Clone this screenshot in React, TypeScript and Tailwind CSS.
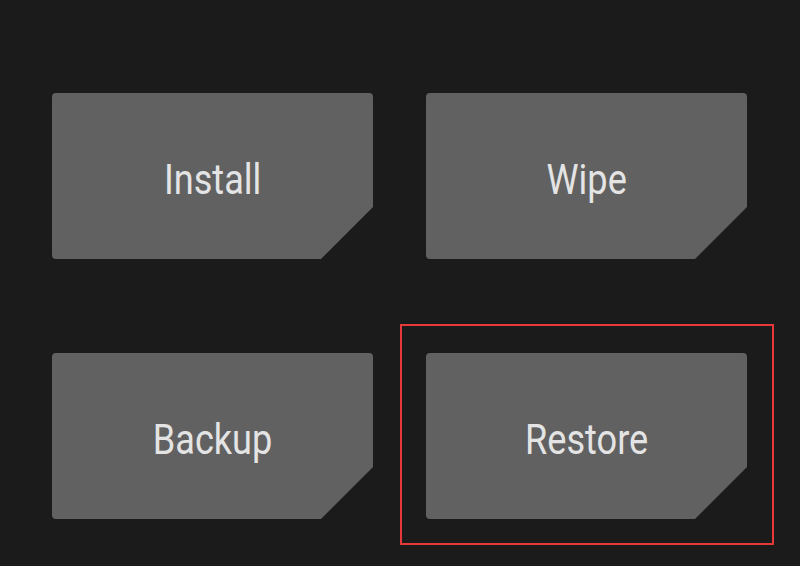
import React from "react";

const Tile: React.FC<{ label: string; highlight?: boolean }> = ({ label, highlight }) => (
  <div className="relative">
    {highlight && (
      <div className="pointer-events-none absolute -left-[26px] -top-[29px] -right-[27px] -bottom-[26px] border-2 border-[#e8393a]" />
    )}
    <button
      className="flex h-[166px] w-[321px] items-center justify-center rounded-[4px] bg-[#616161] text-[42px] font-normal text-[#e4e4e4] [clip-path:polygon(0_0,100%_0,100%_calc(100%_-_52px),calc(100%_-_52px)_100%,0_100%)]"
      style={{ fontFamily: "Roboto, 'Noto Sans', sans-serif" }}
    >
      <span className="inline-block scale-x-[0.86] pt-[6px]">{label}</span>
    </button>
  </div>
);

const App: React.FC = () => {
  return (
    <div className="h-[566px] w-[800px] overflow-hidden bg-[#1b1b1b] pl-[52px] pt-[93px]">
      <div className="grid w-fit grid-cols-[321px_321px] gap-x-[53px] gap-y-[94px]">
        <Tile label="Install" />
        <Tile label="Wipe" />
        <Tile label="Backup" />
        <Tile label="Restore" highlight />
      </div>
    </div>
  );
};

export default App;
